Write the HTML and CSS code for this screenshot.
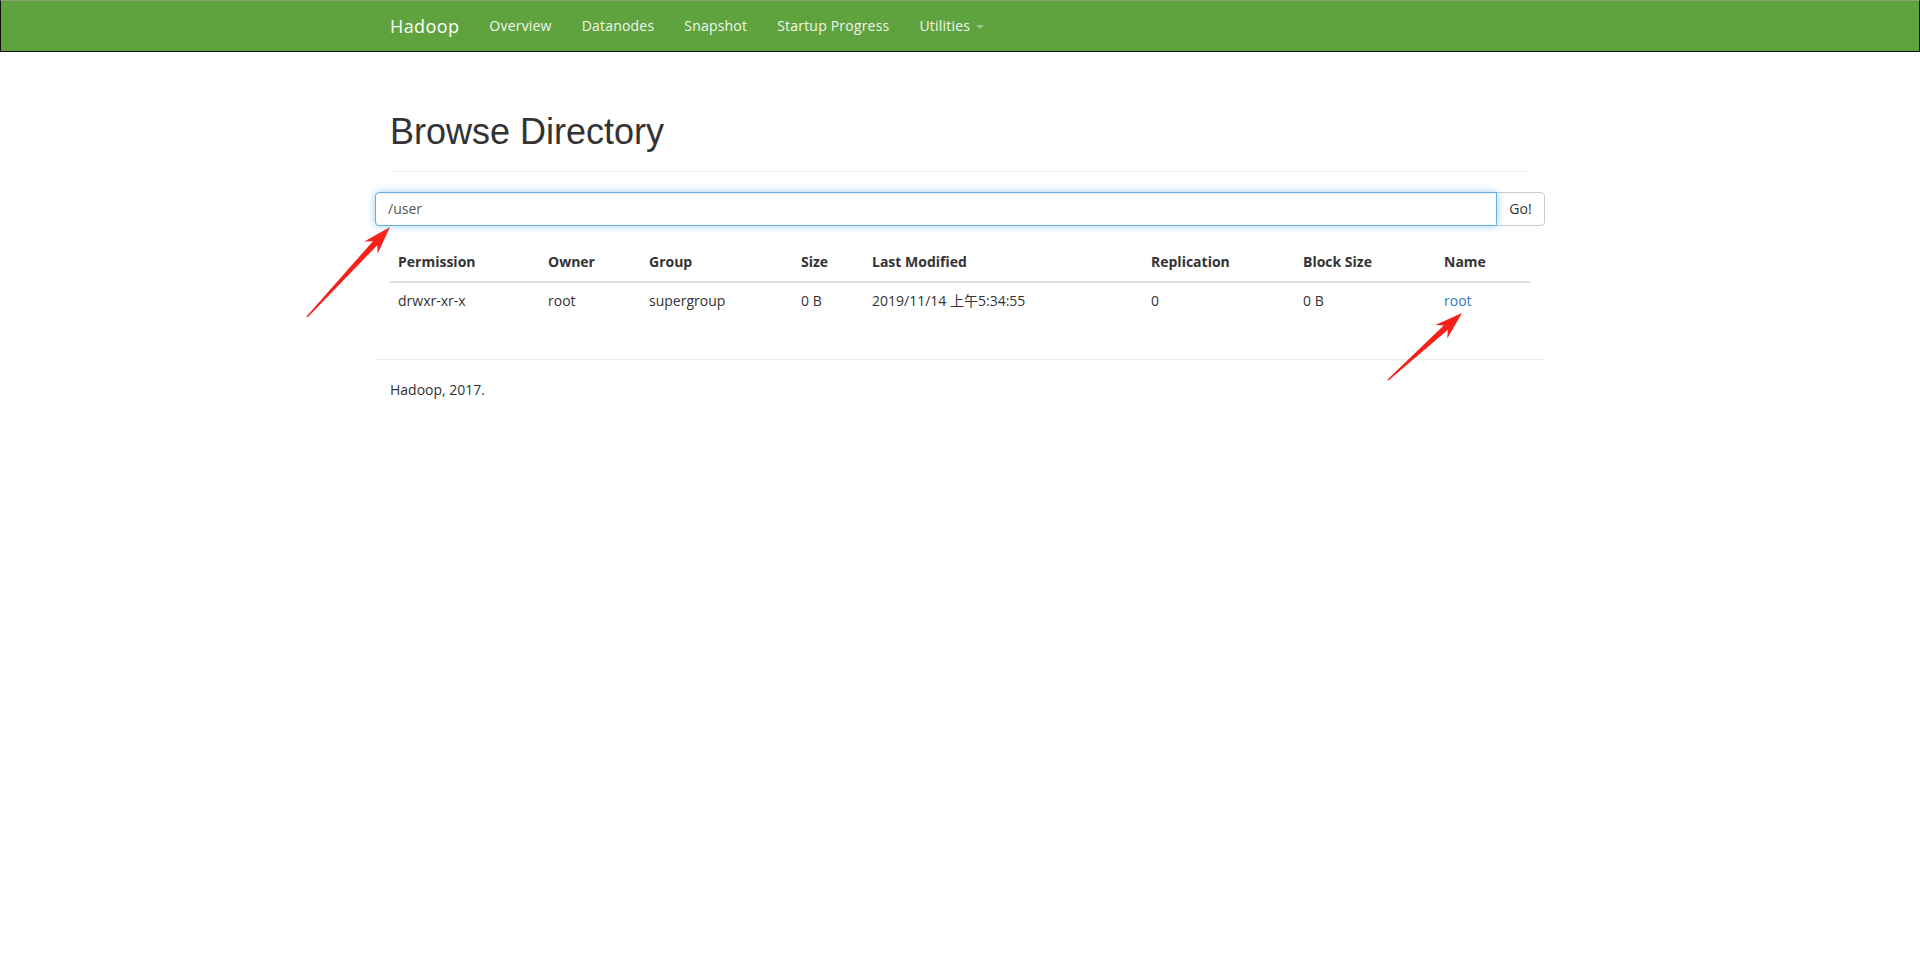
FILE: index.html
```html
<!DOCTYPE html>
<html lang="en">
<head>
<meta charset="utf-8">
<title>Browsing HDFS</title>
<link rel="stylesheet" href="styles.css">
</head>
<body>
<header class="navbar">
  <div class="nav-inner">
    <a class="brand" href="#">Hadoop</a>
    <ul class="nav-links">
      <li><a href="#">Overview</a></li>
      <li><a href="#">Datanodes</a></li>
      <li><a href="#">Snapshot</a></li>
      <li><a href="#">Startup Progress</a></li>
      <li><a href="#">Utilities <span class="caret"></span></a></li>
    </ul>
  </div>
</header>

<main class="container">
  <div class="page-header">
    <h1>Browse Directory</h1>
  </div>

  <form class="input-group">
    <input class="form-control" type="text" value="/user">
    <button class="btn" type="button">Go!</button>
  </form>

  <table class="table">
    <thead>
      <tr>
        <th class="c1">Permission</th>
        <th class="c2">Owner</th>
        <th class="c3">Group</th>
        <th class="c4">Size</th>
        <th class="c5">Last Modified</th>
        <th class="c6">Replication</th>
        <th class="c7">Block Size</th>
        <th class="c8">Name</th>
      </tr>
    </thead>
    <tbody>
      <tr>
        <td>drwxr-xr-x</td>
        <td>root</td>
        <td>supergroup</td>
        <td>0 B</td>
        <td>2019/11/14 上午5:34:55</td>
        <td>0</td>
        <td>0 B</td>
        <td><a class="link" href="#">root</a></td>
      </tr>
    </tbody>
  </table>

  <hr class="footer-rule">
  <footer class="footer">
    <p>Hadoop, 2017.</p>
  </footer>
</main>

<svg class="annotations" width="1920" height="976" viewBox="0 0 1920 976" xmlns="http://www.w3.org/2000/svg">
  <polygon fill="#f5221b" points="307.5,317.5 377.3,245.2 377.6,253.7 390,227 364.4,241.5 372.9,241.2 306.5,316.5"/>
  <polygon fill="#f5221b" points="1388.5,380.5 1447.7,330.0 1447.3,338.5 1462,313 1435.3,325.1 1443.7,325.6 1387.5,379.5"/>
</svg>
</body>
</html>
```

FILE: styles.css
```css
* {
  box-sizing: border-box;
}

html, body {
  margin: 0;
  padding: 0;
  background: #fff;
}

body {
  font-family: "Open Sans", "Noto Sans CJK SC", sans-serif;
  font-size: 14px;
  line-height: 20px;
  color: #333;
  position: relative;
  min-height: 976px;
}

a {
  text-decoration: none;
}

/* Navbar */
.navbar {
  background: #5fa33e;
  border: 1px solid #101010;
  border-top-color: #86a476;
  height: 52px;
}

.nav-inner {
  width: 1170px;
  margin: 0 auto;
  padding: 0 15px;
  display: flex;
  align-items: center;
  height: 50px;
}

.brand {
  color: #fff;
  font-size: 18px;
  line-height: 20px;
  letter-spacing: 0.4px;
  padding: 15px 15px 15px 0;
}

.nav-links {
  list-style: none;
  margin: 0;
  padding: 0;
  display: flex;
}

.nav-links a {
  display: block;
  color: #f2f7ef;
  padding: 15px;
  line-height: 20px;
  letter-spacing: 0.2px;
}

.caret {
  display: inline-block;
  width: 0;
  height: 0;
  margin-left: 2px;
  vertical-align: middle;
  border-top: 4px solid rgba(255, 255, 255, 0.4);
  border-left: 4px solid transparent;
  border-right: 4px solid transparent;
}

/* Container */
.container {
  width: 1170px;
  margin: 0 auto;
}

.page-header {
  margin: 60px 15px 20px;
  padding-bottom: 9px;
  border-bottom: 1px solid #eee;
}

.page-header h1 {
  margin: 0 0 10px;
  font-family: "Liberation Sans", Arial, sans-serif;
  font-weight: 400;
  font-size: 36px;
  line-height: 39.6px;
  color: #333;
}

/* Input group */
.input-group {
  display: flex;
  margin: 0;
  height: 34px;
}

.form-control {
  flex: 1;
  height: 34px;
  padding: 6px 12px;
  font-family: "Open Sans", sans-serif;
  font-size: 14px;
  color: #555;
  background: #fff;
  border: 1px solid #66afe9;
  border-radius: 4px 0 0 4px;
  outline: 0;
  box-shadow: inset 0 1px 1px rgba(0, 0, 0, .075), 0 0 8px rgba(102, 175, 233, .6);
  position: relative;
  z-index: 2;
}

.btn {
  width: 49px;
  height: 34px;
  margin-left: -1px;
  padding: 6px 12px;
  font-family: "Open Sans", sans-serif;
  font-size: 14px;
  color: #333;
  background: #fff;
  border: 1px solid #ccc;
  border-radius: 0 4px 4px 0;
}

/* Table */
.table {
  width: 1140px;
  margin: 18px 15px 40px;
  border-collapse: collapse;
  border-spacing: 0;
  table-layout: fixed;
}

.table th,
.table td {
  padding: 8px;
  line-height: 20px;
  text-align: left;
  vertical-align: top;
  white-space: nowrap;
}

.table th {
  font-weight: 700;
  padding-bottom: 9px;
  border-bottom: 2px solid #ddd;
}

.c1 { width: 150px; }
.c2 { width: 101px; }
.c3 { width: 152px; }
.c4 { width: 71px; }
.c5 { width: 279px; }
.c6 { width: 152px; }
.c7 { width: 141px; }
.c8 { width: 94px; }

.link {
  color: #337ab7;
}

/* Footer */
.footer-rule {
  margin: 20px 0;
  border: 0;
  border-top: 1px solid #eee;
}

.footer p {
  margin: 0 15px 10px;
}

/* Annotation arrows overlay */
.annotations {
  position: absolute;
  top: 0;
  left: 0;
  pointer-events: none;
}
```
